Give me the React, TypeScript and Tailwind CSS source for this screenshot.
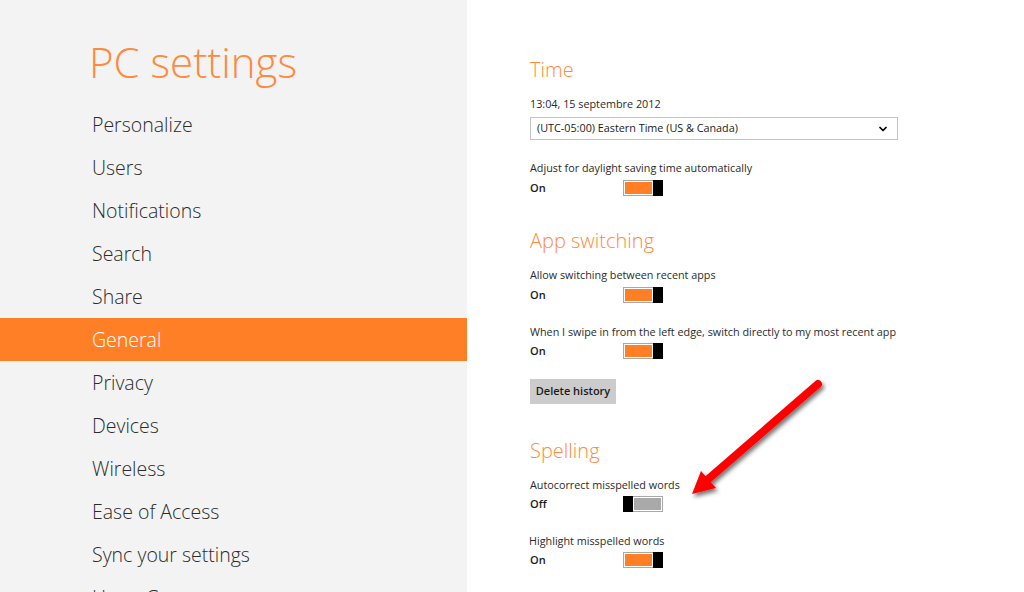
import { ChevronDown } from 'lucide-react';

const navItems = [
  'Personalize',
  'Users',
  'Notifications',
  'Search',
  'Share',
  'General',
  'Privacy',
  'Devices',
  'Wireless',
  'Ease of Access',
  'Sync your settings',
  'HomeGroup',
];

function Toggle({ on }: { on: boolean }) {
  if (on) {
    return (
      <div className="flex h-[16px] w-[40px]">
        <div className="flex-1 border border-r-0 border-[#a8a8a8] p-[1px]">
          <div className="h-full w-full bg-[#ff7f27]" />
        </div>
        <div className="w-[10px] bg-black" />
      </div>
    );
  }
  return (
    <div className="flex h-[16px] w-[40px]">
      <div className="w-[10px] bg-black" />
      <div className="flex-1 border border-l-0 border-[#a8a8a8] p-[1px]">
        <div className="h-full w-full bg-[#a9a9a9]" />
      </div>
    </div>
  );
}

function ToggleRow({ on, className }: { on: boolean; className: string }) {
  return (
    <div className={`flex h-[16px] items-center ${className}`}>
      <span className="w-[93px] pt-px text-[11px] font-semibold text-[#1a1a1a]">{on ? 'On' : 'Off'}</span>
      <Toggle on={on} />
    </div>
  );
}

function Label({ children, className }: { children: string; className: string }) {
  return <div className={`text-[10.8px] leading-[14px] text-[#2a2a2a] ${className}`}>{children}</div>;
}

function Heading({ children, className }: { children: string; className: string }) {
  return <h2 className={`text-[20px] leading-[24px] font-light text-[#ff8a3d] ${className}`}>{children}</h2>;
}

export default function App() {
  return (
    <div className="relative flex h-[592px] w-[1024px] overflow-hidden font-['Open_Sans',sans-serif]">
      {/* Left nav */}
      <div className="w-[467px] shrink-0 bg-[#f3f3f3]">
        <h1 className="h-[103px] pl-[89px] pt-[37px] text-[42px] leading-[50px] font-light text-[#ff8a3d]">
          PC settings
        </h1>
        <nav>
          {navItems.map((item) => (
            <div
              key={item}
              className={`flex h-[43px] items-center pl-[92px] text-[19.5px] font-light ${
                item === 'General' ? 'bg-[#ff7f27] text-white' : 'text-[#2b2b2b]'
              }`}
            >
              {item}
            </div>
          ))}
        </nav>
      </div>

      {/* Settings */}
      <div className="flex-1 bg-white pl-[63px] pt-[58px]">
        <Heading className="">Time</Heading>
        <Label className="mt-[15px]">13:04, 15 septembre 2012</Label>
        <div className="mt-[6px] flex h-[23px] w-[368px] items-center justify-between border border-[#c4c4c4] pl-[6px] pr-[8px] text-[10.8px] text-[#1a1a1a]">
          <span>(UTC-05:00) Eastern Time (US &amp; Canada)</span>
          <ChevronDown className="h-[12px] w-[12px] text-black" strokeWidth={3.5} />
        </div>
        <Label className="mt-[21px]">Adjust for daylight saving time automatically</Label>
        <ToggleRow on className="mt-[5px]" />

        <Heading className="mt-[33px]">App switching</Heading>
        <Label className="mt-[15px]">Allow switching between recent apps</Label>
        <ToggleRow on className="mt-[5px]" />
        <Label className="mt-[22px]">When I swipe in from the left edge, switch directly to my most recent app</Label>
        <ToggleRow on className="mt-[4px]" />
        <button className="mt-[20px] h-[25px] w-[86px] bg-[#cccccc] text-[11px] font-semibold text-[#1a1a1a]">
          Delete history
        </button>

        <Heading className="mt-[35px]">Spelling</Heading>
        <Label className="mt-[15px]">Autocorrect misspelled words</Label>
        <ToggleRow on={false} className="mt-[4px]" />
        <Label className="-ml-px mt-[22px]">Highlight misspelled words</Label>
        <ToggleRow on className="mt-[4px]" />
      </div>

      {/* Red annotation arrow */}
      <svg className="pointer-events-none absolute inset-0" width="1024" height="592" viewBox="0 0 1024 592">
        <defs>
          <filter id="arrowShadow" x="-20%" y="-20%" width="140%" height="140%">
            <feDropShadow dx="2" dy="3" stdDeviation="2" floodColor="#000" floodOpacity="0.55" />
          </filter>
        </defs>
        <g filter="url(#arrowShadow)">
          <line x1="818" y1="384" x2="706" y2="481" stroke="#ff0000" strokeWidth="8" strokeLinecap="round" />
          <polygon points="692,494 716,488 701,471" fill="#ff0000" />
        </g>
      </svg>
    </div>
  );
}
